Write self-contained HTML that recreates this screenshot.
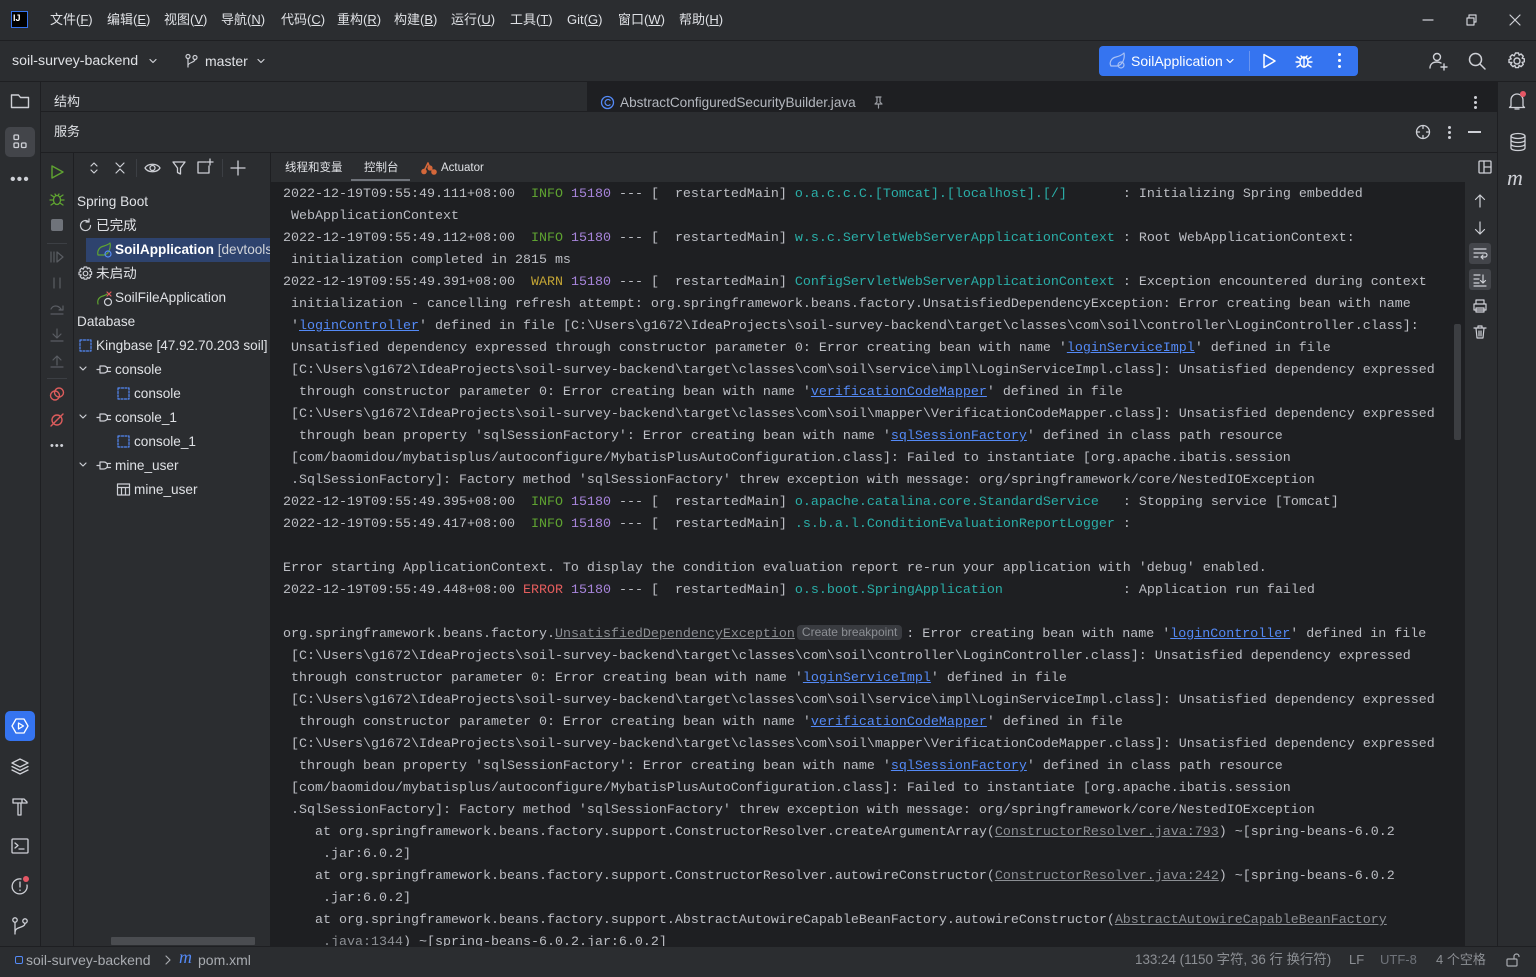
<!DOCTYPE html>
<html><head><meta charset="utf-8">
<style>
*{margin:0;padding:0;box-sizing:border-box}
body{width:1536px;height:977px;overflow:hidden;background:#2b2d30;font-family:"Liberation Sans","Noto Sans CJK SC",sans-serif;color:#dfe1e5;font-size:13px;position:relative}
.a{position:absolute}
.t{position:absolute;white-space:nowrap;line-height:16px}
.tr{font-size:13.6px}
svg.i{position:absolute;fill:none;stroke:#ced0d6;stroke-width:1.2;stroke-linecap:round;stroke-linejoin:round}
u{text-decoration:underline}
#con{position:absolute;left:271px;top:182px;width:1194px;height:764px;background:#1e1f22;overflow:hidden}
#con pre{font-family:"Liberation Mono",monospace;font-size:13.33px;line-height:22px;color:#bcbec4;position:absolute;left:12px;top:2px;white-space:pre}
.g{color:#5fa331}.w{color:#c3a434}.e{color:#e35d5d}.p{color:#a885dc}.c{color:#2aaea8}
.l{color:#548af7;text-decoration:underline}
.gl{color:#8c8f94;text-decoration:underline}
.bp{display:inline-block;font-family:"Liberation Sans",sans-serif;font-size:12px;line-height:15px;background:#393b40;color:#8c8f94;border-radius:4px;padding:0 5px;margin:0 4px 0 2px;vertical-align:1px}
</style></head><body>
<!-- menu bar -->
<div class="a" style="left:0;top:40px;width:1536px;height:1px;background:#1e1f22"></div>
<div class="a" style="left:11px;top:11px;width:17px;height:17px;border:1.5px solid #3574f0;background:#000"></div>
<div class="t" style="left:13px;top:10px;font-size:9px;font-weight:bold;color:#fff">IJ</div>
<div class="t" style="left:50px;top:12px">文件(<u>F</u>)</div>
<div class="t" style="left:107px;top:12px">编辑(<u>E</u>)</div>
<div class="t" style="left:164px;top:12px">视图(<u>V</u>)</div>
<div class="t" style="left:221px;top:12px">导航(<u>N</u>)</div>
<div class="t" style="left:281px;top:12px">代码(<u>C</u>)</div>
<div class="t" style="left:337px;top:12px">重构(<u>R</u>)</div>
<div class="t" style="left:394px;top:12px">构建(<u>B</u>)</div>
<div class="t" style="left:451px;top:12px">运行(<u>U</u>)</div>
<div class="t" style="left:510px;top:12px">工具(<u>T</u>)</div>
<div class="t" style="left:567px;top:12px">Git(<u>G</u>)</div>
<div class="t" style="left:618px;top:12px">窗口(<u>W</u>)</div>
<div class="t" style="left:679px;top:12px">帮助(<u>H</u>)</div>
<svg class="i" style="left:1420px;top:12px" width="16" height="16"><path d="M3 8h10"/></svg>
<svg class="i" style="left:1463px;top:12px" width="16" height="16"><path d="M4 6h7v7H4z M6 6V3h7v7h-2"/></svg>
<svg class="i" style="left:1507px;top:12px" width="16" height="16"><path d="M3 3l10 10M13 3L3 13"/></svg>
<!-- toolbar -->
<div class="a" style="left:0;top:81px;width:1536px;height:1px;background:#1e1f22"></div>
<div class="t" style="left:12px;top:53px;font-size:14.2px">soil-survey-backend</div>
<svg class="i" style="left:147px;top:55px" width="12" height="12"><path d="M3 4.5l3 3 3-3"/></svg>
<svg class="i" style="left:184px;top:53px" width="14" height="16"><circle cx="4" cy="3.5" r="2"/><circle cx="11" cy="4.5" r="2"/><path d="M4 5.5V14M11 6.5c0 3-7 3-7 6"/></svg>
<div class="t" style="left:205px;top:53px;font-size:14px">master</div>
<svg class="i" style="left:255px;top:55px" width="12" height="12"><path d="M3 4.5l3 3 3-3"/></svg>
<div class="a" style="left:1099px;top:46px;width:259px;height:30px;background:#3574f0;border-radius:4px"></div>
<svg class="i" style="left:1108px;top:52px;stroke:#a9c1f5" width="20" height="18"><path d="M3 14c-2-3 0-8 5-9 4-1 7-3 8-4 1 5-1 12-7 13H3z"/><circle cx="13" cy="13" r="3"/></svg>
<div class="t" style="left:1131px;top:53px;font-size:14px;color:#fff">SoilApplication</div>
<svg class="i" style="left:1224px;top:55px;stroke:#fff" width="12" height="12"><path d="M3 4.5l3 3 3-3"/></svg>
<div class="a" style="left:1249px;top:51px;width:1px;height:20px;background:#6a95f0"></div>
<svg class="i" style="left:1260px;top:52px;stroke:#fff;stroke-width:1.5" width="18" height="18"><path d="M4 2.5l11 6.5-11 6.5z"/></svg>
<svg class="i" style="left:1295px;top:52px;stroke:#fff;stroke-width:1.4" width="18" height="18"><ellipse cx="9" cy="10" rx="4" ry="5"/><path d="M6 4l2 2M12 4l-2 2M1 10h4M13 10h4M2 5l3 2M16 5l-3 2M2 15l3-2M16 15l-3-2M9 6v9"/></svg>
<div class="a" style="left:1338px;top:53px;width:3px;height:3px;background:#fff;border-radius:2px;box-shadow:0 6px 0 #fff,0 12px 0 #fff"></div>
<svg class="i" style="left:1428px;top:51px;stroke-width:1.4" width="20" height="20"><circle cx="9" cy="6" r="3.5"/><path d="M2 17c0-4 3-6 7-6 2 0 3 .5 4 1M13 16h6M16 13v6"/></svg>
<svg class="i" style="left:1467px;top:51px;stroke-width:1.5" width="20" height="20"><circle cx="8.5" cy="8.5" r="6"/><path d="M13 13l5 5"/></svg>
<svg class="i" style="left:1507px;top:51px;stroke-width:1.4" width="20" height="20"><circle cx="10" cy="10" r="3"/><path d="M8.5 2h3l.6 2.2 2-1.2 2.2 2.2-1.2 2 2.2.6v3l-2.2.6 1.2 2-2.2 2.2-2-1.2-.6 2.2h-3l-.6-2.2-2 1.2-2.2-2.2 1.2-2L2 11.5v-3l2.2-.6-1.2-2 2.2-2.2 2 1.2z"/></svg>
<!-- left strip -->
<div class="a" style="left:40px;top:82px;width:1px;height:864px;background:#1e1f22"></div>
<svg class="i" style="left:10px;top:92px;stroke-width:1.4" width="20" height="18"><path d="M1.5 3.5v12h17v-10h-8l-2-2.5h-7z"/></svg>
<div class="a" style="left:5px;top:127px;width:30px;height:30px;background:#43454a;border-radius:5px"></div>
<svg class="i" style="left:11px;top:133px;stroke-width:1.3" width="18" height="18"><rect x="3" y="2" width="4.5" height="4.5" rx="1"/><rect x="3" y="10" width="4.5" height="4.5" rx="1"/><rect x="10.5" y="10" width="4.5" height="4.5" rx="1"/></svg>
<div class="t" style="left:10px;top:172px;font-size:16px;letter-spacing:1px;color:#ced0d6">•••</div>
<div class="a" style="left:5px;top:711px;width:30px;height:30px;background:#3574f0;border-radius:5px"></div>
<svg class="i" style="left:10px;top:716px;stroke:#fff;stroke-width:1.3" width="20" height="20"><path d="M6 3h8l4 7-4 7H6l-4-7z M8.5 7v6l5-3z"/></svg>
<svg class="i" style="left:10px;top:756px;stroke-width:1.3" width="20" height="20"><path d="M10 3l8 4-8 4-8-4z M2 10.5l8 4 8-4 M2 14l8 4 8-4"/></svg>
<svg class="i" style="left:10px;top:796px;stroke-width:1.3" width="20" height="20"><path d="M3 3h11l3 3v1h-5V3 M8 7v12h3V7 M3 3v4h9"/></svg>
<svg class="i" style="left:10px;top:836px;stroke-width:1.3" width="20" height="20"><rect x="2" y="3" width="16" height="14" rx="1"/><path d="M5 7l3 2.5L5 12M9 13h5"/></svg>
<svg class="i" style="left:10px;top:876px;stroke-width:1.3" width="20" height="20"><path d="M17 9a7.5 7.5 0 1 1-6-6"/><path d="M10 6v5M10 14v.5"/></svg>
<div class="a" style="left:23px;top:876px;width:6px;height:6px;border-radius:3px;background:#e55765"></div>
<svg class="i" style="left:10px;top:916px;stroke-width:1.3" width="20" height="20"><circle cx="5" cy="4" r="2.2"/><circle cx="15" cy="5" r="2.2"/><path d="M5 6.2V18M15 7.2c0 5-10 3-10 9"/></svg>
<!-- right strip -->
<div class="a" style="left:1497px;top:82px;width:1px;height:864px;background:#1e1f22"></div>
<svg class="i" style="left:1507px;top:91px;stroke-width:1.3" width="20" height="20"><path d="M4 15V9a6 6 0 0 1 12 0v6l1.5 1.5h-15z M8 18h4"/></svg>
<div class="a" style="left:1520px;top:91px;width:6px;height:6px;border-radius:3px;background:#e55765"></div>
<svg class="i" style="left:1508px;top:132px;stroke-width:1.3" width="20" height="20"><ellipse cx="10" cy="4" rx="7" ry="2.5"/><path d="M3 4v12c0 3.3 14 3.3 14 0V4M3 8c0 3.3 14 3.3 14 0M3 12c0 3.3 14 3.3 14 0"/></svg>
<div class="t" style="left:1507px;top:170px;font-size:22px;font-style:italic;color:#ced0d6;font-family:'Liberation Serif',serif">m</div>
<!-- structure row -->
<div class="a" style="left:587px;top:82px;width:910px;height:30px;background:#1e1f22"></div>
<div class="a" style="left:41px;top:111px;width:1456px;height:1px;background:#1e1f22"></div>
<div class="t" style="left:54px;top:94px">结构</div>
<svg class="i" style="left:600px;top:95px;stroke:#548af7;stroke-width:1.3" width="15" height="15"><circle cx="7.5" cy="7.5" r="6"/><path d="M10 5.2a3 3 0 1 0 0 4.6"/></svg>
<div class="t" style="left:620px;top:95px;color:#b4b8bf;font-size:13.6px">AbstractConfiguredSecurityBuilder.java</div>
<svg class="i" style="left:872px;top:96px;stroke:#9a9da3" width="13" height="13"><path d="M4 1h5M5 1v5l-2 2h7L8 6V1M6.5 8v4"/></svg>
<div class="a" style="left:1474px;top:96px;width:3px;height:3px;background:#ced0d6;border-radius:2px;box-shadow:0 5px 0 #ced0d6,0 10px 0 #ced0d6"></div>
<!-- services header -->
<div class="t" style="left:54px;top:124px">服务</div>
<svg class="i" style="left:1415px;top:124px;stroke-width:1.3" width="16" height="16"><circle cx="8" cy="8" r="6.5"/><path d="M8 1.5v3M8 11.5v3M1.5 8h3M11.5 8h3"/></svg>
<div class="a" style="left:1448px;top:126px;width:3px;height:3px;background:#ced0d6;border-radius:2px;box-shadow:0 5px 0 #ced0d6,0 10px 0 #ced0d6"></div>
<div class="a" style="left:1468px;top:131px;width:13px;height:1.5px;background:#ced0d6"></div>
<div class="a" style="left:41px;top:152px;width:1456px;height:1px;background:#1e1f22"></div>
<!-- services side toolbar -->
<div class="a" style="left:73px;top:153px;width:1px;height:793px;background:#1e1f22"></div>
<div class="a" style="left:270px;top:153px;width:1px;height:793px;background:#1e1f22"></div>
<svg class="i" style="left:49px;top:164px;stroke:#5fa331;stroke-width:1.4" width="16" height="16"><path d="M3 2l11 6-11 6z"/></svg>
<svg class="i" style="left:49px;top:191px;stroke:#5fa331;stroke-width:1.3" width="16" height="16"><ellipse cx="8" cy="9" rx="3.5" ry="4.5"/><path d="M1 9h3M12 9h3M2 4l3 2M14 4l-3 2M2 14l3-2M14 14l-3-2M6 3l1 1.5M10 3L9 4.5"/></svg>
<div class="a" style="left:51px;top:219px;width:12px;height:12px;background:#6f737a;border-radius:2px"></div>
<div class="a" style="left:47px;top:243px;width:20px;height:1px;background:#3c3f44"></div>
<svg class="i" style="left:49px;top:249px;stroke:#5a5d63" width="16" height="16"><path d="M2 3v10M5 3v10M8 3l6 5-6 5z"/></svg>
<svg class="i" style="left:49px;top:275px;stroke:#5a5d63" width="16" height="16"><path d="M5 3v10M11 3v10"/></svg>
<svg class="i" style="left:49px;top:301px;stroke:#5a5d63" width="16" height="16"><path d="M2 8c2-4 7-4 10 0l-2 1h4V5M2 13h12"/></svg>
<svg class="i" style="left:49px;top:327px;stroke:#5a5d63" width="16" height="16"><path d="M8 2v8M4 7l4 4 4-4M2 14h12"/></svg>
<svg class="i" style="left:49px;top:353px;stroke:#5a5d63" width="16" height="16"><path d="M8 12V4M4 7l4-4 4 4M2 14h12"/></svg>
<div class="a" style="left:47px;top:378px;width:20px;height:1px;background:#3c3f44"></div>
<svg class="i" style="left:49px;top:386px;stroke:#db5c5c;stroke-width:1.4" width="16" height="16"><circle cx="6" cy="9.5" r="4.5"/><circle cx="10" cy="6.5" r="4.5"/></svg>
<svg class="i" style="left:49px;top:412px;stroke:#db5c5c;stroke-width:1.4" width="16" height="16"><circle cx="8" cy="8" r="5"/><path d="M2 14L14 2"/></svg>
<div class="t" style="left:50px;top:438px;font-size:11px;letter-spacing:1px;color:#ced0d6">•••</div>
<!-- tree toolbar -->
<svg class="i" style="left:86px;top:160px" width="16" height="16"><path d="M5 6l3-3 3 3M5 10l3 3 3-3"/></svg>
<svg class="i" style="left:112px;top:160px" width="16" height="16"><path d="M4 3l4 4 4-4M4 13l4-4 4 4"/></svg>
<div class="a" style="left:136px;top:159px;width:1px;height:18px;background:#3c3f44"></div>
<svg class="i" style="left:144px;top:160px;stroke-width:1.3" width="18" height="16"><path d="M1 8c3-5 12-5 15 0-3 5-12 5-15 0z"/><circle cx="8.5" cy="8" r="2.5"/></svg>
<svg class="i" style="left:171px;top:160px;stroke-width:1.3" width="18" height="16"><path d="M2 2h12L9.5 8v6l-3-1.5V8z"/></svg>
<svg class="i" style="left:196px;top:158px;stroke-width:1.3" width="18" height="18"><path d="M10 4H2v11h11V8M14 1v6M11 4h6"/></svg>
<div class="a" style="left:222px;top:159px;width:1px;height:18px;background:#3c3f44"></div>
<svg class="i" style="left:230px;top:160px;stroke-width:1.3" width="18" height="16"><path d="M8 1v14M1 8h14"/></svg>
<!-- tree -->
<div class="a" style="left:74px;top:153px;width:196px;height:784px;overflow:hidden">
<div class="a" style="left:12px;top:85px;width:184px;height:24px;background:#2e436e"></div>
</div>
<div class="t tr" style="left:77px;top:194px">Spring Boot</div>
<svg class="i" style="left:78px;top:218px" width="15" height="15"><path d="M12.5 7.5a5 5 0 1 1-1.8-3.8M11 1v3h-3"/></svg>
<div class="t tr" style="left:96px;top:218px">已完成</div>
<svg class="i" style="left:96px;top:242px;stroke:#5fa331" width="17" height="17"><path d="M2 13c-1-4 1-8 6-9 3-1 5-2 6-3 1 5-1 11-6 12H2z"/><circle cx="12" cy="12" r="3" style="stroke:#548af7"/></svg>
<div class="a" style="left:115px;top:242px;width:155px;height:18px;overflow:hidden"><div class="t tr" style="left:0;top:0;color:#fff"><b style="font-weight:600">SoilApplication</b> <span style="color:#d0d3d8">[devtools]</span></div></div>
<svg class="i" style="left:78px;top:266px" width="15" height="15"><circle cx="7.5" cy="7.5" r="2.3"/><path d="M6.2 1h2.6l.5 1.8 1.7-1 1.8 1.8-1 1.7 1.8.5v2.6l-1.8.5 1 1.7-1.8 1.8-1.7-1-.5 1.8H6.2l-.5-1.8-1.7 1-1.8-1.8 1-1.7L1 8.8V6.2l1.8-.5-1-1.7 1.8-1.8 1.7 1z"/></svg>
<div class="t tr" style="left:96px;top:266px">未启动</div>
<svg class="i" style="left:96px;top:289px;stroke:#5fa331" width="18" height="18"><path d="M2 15c-1-4 1-7 5-8 2-.5 3-1 4-2"/><circle cx="12" cy="13" r="3.5" style="stroke:#ced0d6"/><path d="M11 3l4 4M15 3l-4 4" style="stroke:#e35d5d"/></svg>
<div class="t tr" style="left:115px;top:290px">SoilFileApplication</div>
<div class="t tr" style="left:77px;top:314px">Database</div>
<svg class="i" style="left:78px;top:338px;stroke:#548af7" width="15" height="15"><path d="M2 2h11v11H2z" stroke-dasharray="2 1.5"/></svg>
<div class="a" style="left:96px;top:338px;width:174px;height:18px;overflow:hidden"><div class="t tr" style="left:0;top:0">Kingbase [47.92.70.203 soil]</div></div>
<svg class="i" style="left:78px;top:364px" width="10" height="10"><path d="M2 3l3 3 3-3"/></svg>
<svg class="i" style="left:96px;top:362px" width="16" height="15"><path d="M1 7.5h3M4 4h4a3.5 3.5 0 0 1 0 7H4z M11.5 5.5h3M11.5 9.5h3"/></svg>
<div class="t tr" style="left:115px;top:362px">console</div>
<svg class="i" style="left:116px;top:386px;stroke:#548af7" width="15" height="15"><path d="M2 2h11v11H2z" stroke-dasharray="2 1.5"/></svg>
<div class="t tr" style="left:134px;top:386px">console</div>
<svg class="i" style="left:78px;top:412px" width="10" height="10"><path d="M2 3l3 3 3-3"/></svg>
<svg class="i" style="left:96px;top:410px" width="16" height="15"><path d="M1 7.5h3M4 4h4a3.5 3.5 0 0 1 0 7H4z M11.5 5.5h3M11.5 9.5h3"/></svg>
<div class="t tr" style="left:115px;top:410px">console_1</div>
<svg class="i" style="left:116px;top:434px;stroke:#548af7" width="15" height="15"><path d="M2 2h11v11H2z" stroke-dasharray="2 1.5"/></svg>
<div class="t tr" style="left:134px;top:434px">console_1</div>
<svg class="i" style="left:78px;top:460px" width="10" height="10"><path d="M2 3l3 3 3-3"/></svg>
<svg class="i" style="left:96px;top:458px" width="16" height="15"><path d="M1 7.5h3M4 4h4a3.5 3.5 0 0 1 0 7H4z M11.5 5.5h3M11.5 9.5h3"/></svg>
<div class="t tr" style="left:115px;top:458px">mine_user</div>
<svg class="i" style="left:116px;top:482px" width="15" height="15"><path d="M1.5 2h12v11h-12z M1.5 5.5h12M5.5 5.5V13M9.5 5.5V13"/></svg>
<div class="t tr" style="left:134px;top:482px">mine_user</div>
<div class="a" style="left:111px;top:937px;width:144px;height:8px;background:#4a4c50;border-radius:1px"></div>
<!-- console tabs -->
<div class="t" style="left:285px;top:160px;font-size:11.5px">线程和变量</div>
<div class="t" style="left:364px;top:160px;font-size:11.5px">控制台</div>
<div class="a" style="left:351px;top:179px;width:59px;height:2px;background:#6f737a"></div>
<svg class="i" style="left:421px;top:159px;stroke:#d4673a;stroke-width:1.6" width="16" height="16"><path d="M3 12l4-8 2 5 4 4"/><circle cx="3" cy="12.5" r="2" style="fill:#d4673a"/><circle cx="9" cy="9" r="1.8" style="fill:#d4673a"/><circle cx="13" cy="13" r="2" style="fill:#d4673a"/></svg>
<div class="t" style="left:441px;top:160px;font-size:11.5px">Actuator</div>
<svg class="i" style="left:1477px;top:159px;stroke-width:1.3" width="16" height="16"><rect x="2" y="2" width="12" height="12" rx="1"/><path d="M7 2v12M7 8h7"/></svg>
<!-- console right toolbar -->
<div class="a" style="left:1465px;top:182px;width:32px;height:764px;background:#2b2d30"></div>
<svg class="i" style="left:1472px;top:193px" width="16" height="16"><path d="M8 14V2M3.5 6.5L8 2l4.5 4.5"/></svg>
<svg class="i" style="left:1472px;top:220px" width="16" height="16"><path d="M8 2v12M3.5 9.5L8 14l4.5-4.5"/></svg>
<div class="a" style="left:1469px;top:243px;width:22px;height:21px;background:#43454a;border-radius:3px"></div>
<svg class="i" style="left:1472px;top:246px" width="16" height="16"><path d="M2 3h12M2 7h11a2 2 0 0 1 0 4H9l2-2M9 11l2 2M2 11h4"/></svg>
<div class="a" style="left:1469px;top:269px;width:22px;height:21px;background:#43454a;border-radius:3px"></div>
<svg class="i" style="left:1472px;top:272px" width="16" height="16"><path d="M2 3h6M2 7h5M2 11h5M2 14h12M11 3v8M8.5 8.5L11 11l2.5-2.5"/></svg>
<svg class="i" style="left:1472px;top:298px" width="16" height="16"><path d="M4 6V2h8v4M2 6h12v6H2zM4 10h8v4H4z"/></svg>
<svg class="i" style="left:1472px;top:324px" width="16" height="16"><path d="M2 4h12M6 4V2h4v2M4 4l1 10h6l1-10M7 7v5M9 7v5"/></svg>
<!-- console -->
<div id="con"><div class="a" style="left:1183px;top:142px;width:7px;height:116px;background:#3c3e42;border-radius:2px"></div>
<pre>2022-12-19T09:55:49.111+08:00  <span class="g">INFO</span> <span class="p">15180</span> --- [  restartedMain] <span class="c">o.a.c.c.C.[Tomcat].[localhost].[/]      </span> : Initializing Spring embedded
 WebApplicationContext
2022-12-19T09:55:49.112+08:00  <span class="g">INFO</span> <span class="p">15180</span> --- [  restartedMain] <span class="c">w.s.c.ServletWebServerApplicationContext</span> : Root WebApplicationContext:
 initialization completed in 2815 ms
2022-12-19T09:55:49.391+08:00  <span class="w">WARN</span> <span class="p">15180</span> --- [  restartedMain] <span class="c">ConfigServletWebServerApplicationContext</span> : Exception encountered during context
 initialization - cancelling refresh attempt: org.springframework.beans.factory.UnsatisfiedDependencyException: Error creating bean with name
 '<span class="l">loginController</span>' defined in file [C:\Users\g1672\IdeaProjects\soil-survey-backend\target\classes\com\soil\controller\LoginController.class]:
 Unsatisfied dependency expressed through constructor parameter 0: Error creating bean with name '<span class="l">loginServiceImpl</span>' defined in file
 [C:\Users\g1672\IdeaProjects\soil-survey-backend\target\classes\com\soil\service\impl\LoginServiceImpl.class]: Unsatisfied dependency expressed
  through constructor parameter 0: Error creating bean with name '<span class="l">verificationCodeMapper</span>' defined in file
 [C:\Users\g1672\IdeaProjects\soil-survey-backend\target\classes\com\soil\mapper\VerificationCodeMapper.class]: Unsatisfied dependency expressed
  through bean property 'sqlSessionFactory': Error creating bean with name '<span class="l">sqlSessionFactory</span>' defined in class path resource
 [com/baomidou/mybatisplus/autoconfigure/MybatisPlusAutoConfiguration.class]: Failed to instantiate [org.apache.ibatis.session
 .SqlSessionFactory]: Factory method 'sqlSessionFactory' threw exception with message: org/springframework/core/NestedIOException
2022-12-19T09:55:49.395+08:00  <span class="g">INFO</span> <span class="p">15180</span> --- [  restartedMain] <span class="c">o.apache.catalina.core.StandardService  </span> : Stopping service [Tomcat]
2022-12-19T09:55:49.417+08:00  <span class="g">INFO</span> <span class="p">15180</span> --- [  restartedMain] <span class="c">.s.b.a.l.ConditionEvaluationReportLogger</span> :

Error starting ApplicationContext. To display the condition evaluation report re-run your application with 'debug' enabled.
2022-12-19T09:55:49.448+08:00 <span class="e">ERROR</span> <span class="p">15180</span> --- [  restartedMain] <span class="c">o.s.boot.SpringApplication              </span> : Application run failed

org.springframework.beans.factory.<span class="gl">UnsatisfiedDependencyException</span><span class="bp">Create breakpoint</span>: Error creating bean with name '<span class="l">loginController</span>' defined in file
 [C:\Users\g1672\IdeaProjects\soil-survey-backend\target\classes\com\soil\controller\LoginController.class]: Unsatisfied dependency expressed
 through constructor parameter 0: Error creating bean with name '<span class="l">loginServiceImpl</span>' defined in file
 [C:\Users\g1672\IdeaProjects\soil-survey-backend\target\classes\com\soil\service\impl\LoginServiceImpl.class]: Unsatisfied dependency expressed
  through constructor parameter 0: Error creating bean with name '<span class="l">verificationCodeMapper</span>' defined in file
 [C:\Users\g1672\IdeaProjects\soil-survey-backend\target\classes\com\soil\mapper\VerificationCodeMapper.class]: Unsatisfied dependency expressed
  through bean property 'sqlSessionFactory': Error creating bean with name '<span class="l">sqlSessionFactory</span>' defined in class path resource
 [com/baomidou/mybatisplus/autoconfigure/MybatisPlusAutoConfiguration.class]: Failed to instantiate [org.apache.ibatis.session
 .SqlSessionFactory]: Factory method 'sqlSessionFactory' threw exception with message: org/springframework/core/NestedIOException
    at org.springframework.beans.factory.support.ConstructorResolver.createArgumentArray(<span class="gl">ConstructorResolver.java:793</span>) ~[spring-beans-6.0.2
     .jar:6.0.2]
    at org.springframework.beans.factory.support.ConstructorResolver.autowireConstructor(<span class="gl">ConstructorResolver.java:242</span>) ~[spring-beans-6.0.2
     .jar:6.0.2]
    at org.springframework.beans.factory.support.AbstractAutowireCapableBeanFactory.autowireConstructor(<span class="gl">AbstractAutowireCapableBeanFactory</span>
     <span class="gl">.java:1344</span>) ~[spring-beans-6.0.2.jar:6.0.2]</pre></div>
<!-- status bar -->
<div class="a" style="left:0;top:946px;width:1536px;height:1px;background:#1e1f22"></div>
<div class="a" style="left:15px;top:956px;width:8px;height:8px;border:1.3px solid #548af7;border-radius:2px"></div>
<div class="t" style="left:26px;top:952px;color:#a8abb0;font-size:14px">soil-survey-backend</div>
<svg class="i" style="left:163px;top:954px;stroke:#a8abb0" width="10" height="12"><path d="M3 2l4 4-4 4"/></svg>
<div class="t" style="left:179px;top:949px;font-size:18px;font-style:italic;color:#548af7;font-family:'Liberation Serif',serif">m</div>
<div class="t" style="left:198px;top:952px;color:#a8abb0;font-size:14px">pom.xml</div>
<div class="t" style="left:1135px;top:952px;color:#8c8f94;font-size:13.4px">133:24 (1150 字符, 36 行 换行符)</div>
<div class="t" style="left:1349px;top:952px;color:#8c8f94">LF</div>
<div class="t" style="left:1380px;top:952px;color:#6f737a">UTF-8</div>
<div class="t" style="left:1436px;top:952px;color:#8c8f94">4 个空格</div>
<svg class="i" style="left:1505px;top:952px;stroke:#a8abb0" width="16" height="16"><rect x="2" y="7" width="10" height="7" rx="1"/><path d="M9 7V4.5a2.5 2.5 0 0 1 5 0"/></svg>
</body></html>
